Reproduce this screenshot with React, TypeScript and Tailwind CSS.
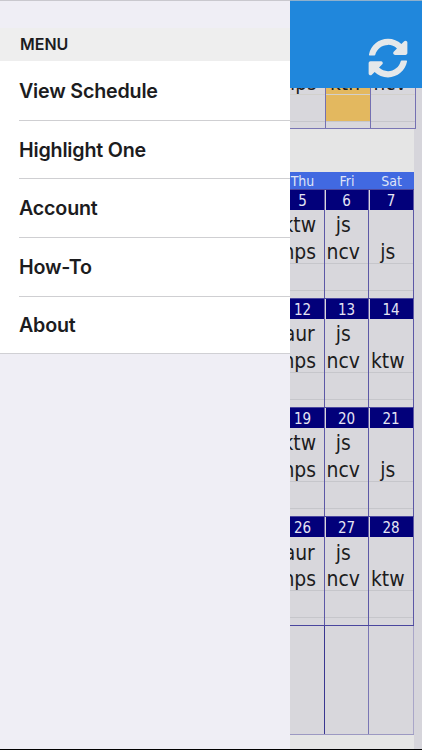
import { FaSyncAlt } from "react-icons/fa";

const menuItems = ["View Schedule", "Highlight One", "Account", "How-To", "About"];

type Day = { date: string; shifts: string[] };

const weeks: Day[][] = [
  [
    { date: "5", shifts: ["ktw", "nps"] },
    { date: "6", shifts: ["js", "ncv"] },
    { date: "7", shifts: ["", "js"] },
  ],
  [
    { date: "12", shifts: ["aur", "nps"] },
    { date: "13", shifts: ["js", "ncv"] },
    { date: "14", shifts: ["", "ktw"] },
  ],
  [
    { date: "19", shifts: ["ktw", "nps"] },
    { date: "20", shifts: ["js", "ncv"] },
    { date: "21", shifts: ["", "js"] },
  ],
  [
    { date: "26", shifts: ["aur", "nps"] },
    { date: "27", shifts: ["js", "ncv"] },
    { date: "28", shifts: ["", "ktw"] },
  ],
];

const shiftText =
  "flex items-center justify-center whitespace-nowrap pt-[5px] pr-[6.5px] text-[20.9px] leading-none text-[#1c1c20]";

function DayCell({ day }: { day: Day }) {
  return (
    <div className="flex h-full flex-col border-r-[1.5px] border-[#5c58a6]">
      <div className="ml-px flex h-[20px] shrink-0 items-center justify-center bg-[#02007a] pt-[3px] pr-px text-[15px] leading-none text-[#e4e4f4]">
        {day.date}
      </div>
      <div className={`h-[26.5px] ${shiftText}`}>{day.shifts[0]}</div>
      <div className={`h-[27px] border-b border-[#c6c6cb] ${shiftText}`}>{day.shifts[1]}</div>
      <div className="h-[27px] border-b border-[#c6c6cb]" />
    </div>
  );
}

function PreviousMonth() {
  return (
    <div className="grid h-[41px] w-[135px] grid-cols-[45px_45px_45px] border-b border-[#7a76b4] bg-[#d8d7dc]">
      {["nps", "ktn", "ncv"].map((name, i) => (
        <div key={name} className="flex flex-col border-r-[1.5px] border-[#7470b2]">
          <div
            className={`flex h-[7px] items-end justify-center border-b border-[#d2d0cc] ${
              i === 1 ? "bg-[#e3b85f]" : ""
            }`}
          >
            <span className="pr-[6px] text-[20.7px] leading-[22px] text-[#1c1c20]">{name}</span>
          </div>
          <div className={`h-[27px] border-b border-[#c6c6cb] ${i === 1 ? "bg-[#e3b85f]" : ""}`} />
        </div>
      ))}
    </div>
  );
}

function Schedule() {
  return (
    <main className="flex flex-1 justify-end overflow-hidden bg-[#d6d5db] font-['DejaVu_Sans_Condensed','DejaVu_Sans',sans-serif] font-stretch-semi-condensed">
      <div className="flex w-[141px] flex-col">
        <div className="h-[41px] shrink-0">
          <PreviousMonth />
        </div>
        <div className="h-[43px] w-[133px] shrink-0 bg-[#e5e5e5]" />
        <div className="w-[133px] shrink-0">
          <div className="grid h-[17px] grid-cols-[44px_44px_45px] bg-[#4169e1] text-center text-[14px] leading-[18px] text-[#dfe4f6]">
            <div className="pr-px">Thu</div>
            <div>Fri</div>
            <div>Sat</div>
          </div>
          {weeks.map((week) => (
            <div
              key={week[0].date}
              className="grid h-[109.1px] grid-cols-[44px_44px_45px] border-t-[1.5px] border-[#4a469e] bg-[#d8d7dc]"
            >
              {week.map((day) => (
                <DayCell key={day.date} day={day} />
              ))}
            </div>
          ))}
          <div className="grid h-[109.5px] grid-cols-[44px_44px_45px] border-y border-t-[#4a469e] border-b-[#9c99c2] bg-[#d8d7dc]">
            <div className="border-r border-[#3a3690]" />
            <div className="border-r border-[#7a76b4]" />
            <div className="border-r border-[#a9a6c8]" />
          </div>
        </div>
        <div className="w-[133px] flex-1 bg-[#e5e5e5]" />
      </div>
    </main>
  );
}

function SideMenu() {
  return (
    <nav className="absolute inset-y-0 left-0 w-[290px] bg-[#efeef5] font-['Inter',sans-serif] text-[#1c1c1e]">
      <div className="mt-7 flex h-[33px] items-center bg-[#eeeeee] pb-px pl-5 text-[16px] font-semibold">
        MENU
      </div>
      <ul className="border-b border-[#d0d0d4] bg-white pt-px">
        {menuItems.map((item, i) => (
          <li key={item} className="pl-[19px]">
            <div
              className={`flex items-center pt-[2px] text-[19.7px] font-semibold tracking-[-0.2px] ${
                i < menuItems.length - 1 ? "h-[58.7px] border-b border-[#cfcfd2]" : "h-[56.5px]"
              }`}
            >
              {item}
            </div>
          </li>
        ))}
      </ul>
    </nav>
  );
}

export default function App() {
  return (
    <div className="relative flex h-[750px] w-[422px] flex-col overflow-hidden">
      <header className="flex h-[88px] shrink-0 items-end justify-end bg-[#2087dc] pr-[14px] pb-[10px]">
        <FaSyncAlt className="size-10 text-[#e5e8ea]" />
      </header>
      <Schedule />
      <SideMenu />
      <div className="absolute inset-x-0 top-0 h-px bg-[#8fb0cc]" />
      <div className="absolute top-0 left-0 h-px w-[290px] bg-[#c9c8ce]" />
      <div className="absolute inset-x-0 bottom-0 h-px bg-black" />
    </div>
  );
}
